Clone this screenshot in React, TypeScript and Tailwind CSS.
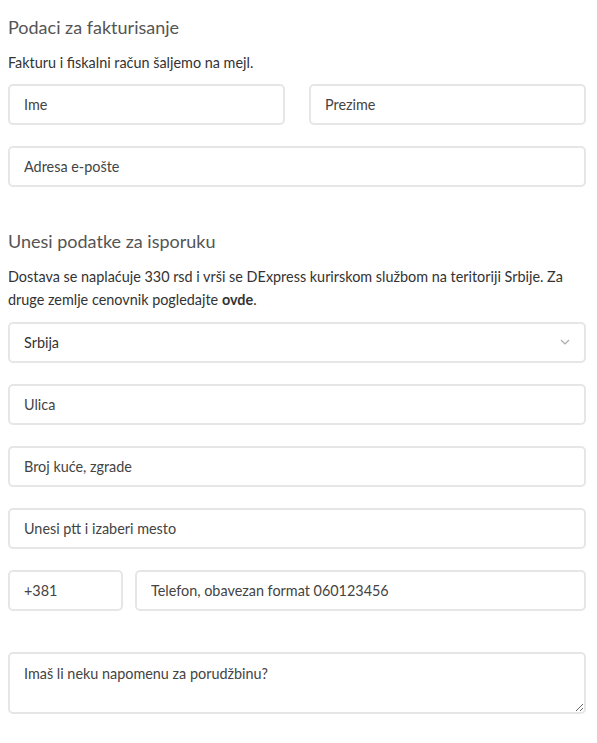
import { useState } from "react";

const inputCls =
  "w-full h-[41px] rounded-[5px] border-2 border-[#e6e6e6] bg-white px-[14px] text-[14.4px] text-[#333] placeholder:text-[#444] outline-none";

const App = () => {
  const [country, setCountry] = useState("Srbija");

  return (
    <div className="min-h-[743px] w-[597px] bg-white pl-[8px] pr-[11px] pt-[14px] font-['Lato','Noto_Sans',sans-serif] text-[#333]">
      {/* Billing */}
      <h2 className="text-[18px] leading-[26px] text-[#555]">Podaci za fakturisanje</h2>
      <p className="mt-[12px] text-[14.4px] leading-[22px]">
        Fakturu i fiskalni račun šaljemo na mejl.
      </p>

      <div className="mt-[10px] flex gap-[24px]">
        <input className={inputCls} placeholder="Ime" />
        <input className={inputCls} placeholder="Prezime" />
      </div>

      <div className="mt-[21px]">
        <input className={inputCls} placeholder="Adresa e-pošte" />
      </div>

      {/* Shipping */}
      <h2 className="mt-[41px] text-[18px] leading-[26px] text-[#555]">Unesi podatke za isporuku</h2>
      <p className="mt-[11px] text-[14.4px] leading-[23px]">
        Dostava se naplaćuje 330 rsd i vrši se DExpress kurirskom službom na teritoriji Srbije. Za
        druge zemlje cenovnik pogledajte <b className="font-bold">ovde</b>.
      </p>

      <div className="relative mt-[11px]">
        <select
          value={country}
          onChange={(e) => setCountry(e.target.value)}
          className={`${inputCls} appearance-none`}
        >
          <option>Srbija</option>
          <option>Hrvatska</option>
          <option>Bosna i Hercegovina</option>
        </select>
        <svg
          className="pointer-events-none absolute right-[16px] top-[17px]"
          width="10"
          height="7"
          viewBox="0 0 10 7"
          fill="none"
        >
          <path d="M1 1l4 4 4-4" stroke="#aaa" strokeWidth="1.2" />
        </svg>
      </div>

      <div className="mt-[21px] flex flex-col gap-[21px]">
        <input className={inputCls} placeholder="Ulica" />
        <input className={inputCls} placeholder="Broj kuće, zgrade" />
        <input className={inputCls} placeholder="Unesi ptt i izaberi mesto" />
        <div className="flex gap-[12px]">
          <input className={`${inputCls} !w-[115px] shrink-0`} placeholder="+381" />
          <input className={inputCls} placeholder="Telefon, obavezan format 060123456" />
        </div>
      </div>

      <textarea
        className="mt-[41px] block h-[62px] w-full rounded-[5px] border-2 border-[#e6e6e6] bg-white px-[14px] py-[10px] text-[14.4px] leading-[20px] text-[#333] placeholder:text-[#444] outline-none"
        placeholder="Imaš li neku napomenu za porudžbinu?"
      />
    </div>
  );
};

export default App;
